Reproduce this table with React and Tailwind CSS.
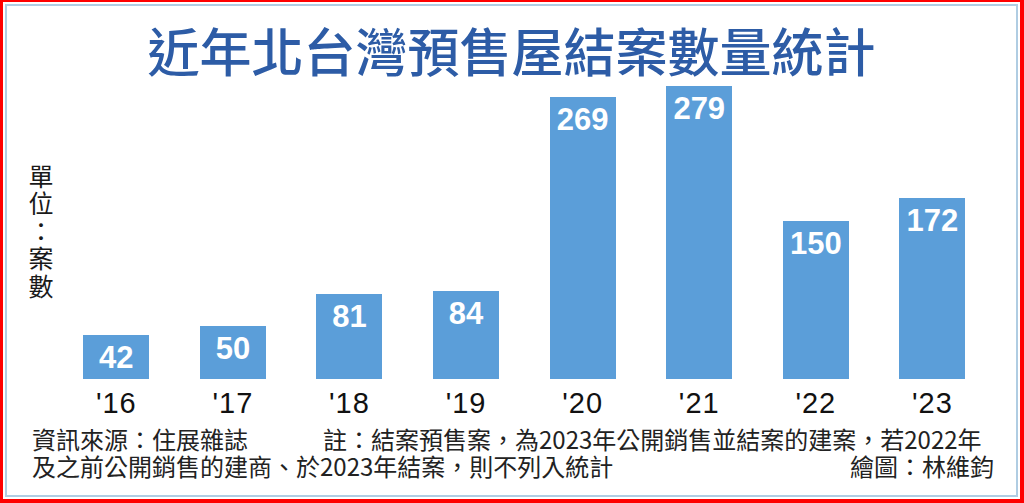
import React from "react";

// 近年北台灣預售屋結案數量統計 (bar chart graphic)
const data = [
  { year: "'16", value: 42 },
  { year: "'17", value: 50 },
  { year: "'18", value: 81 },
  { year: "'19", value: 84 },
  { year: "'20", value: 269 },
  { year: "'21", value: 279 },
  { year: "'22", value: 150 },
  { year: "'23", value: 172 },
];

const PX_PER_CASE = 1.05;
const cjk = "font-['Noto_Sans_CJK_TC','Noto_Sans_CJK_SC',sans-serif]";

function UnitLabel() {
  return (
    <div className="w-[51px] shrink-0 self-start pl-[21px] pt-[78px]">
      <div
        className={`text-[25px] leading-[25px] tracking-[2.4px] text-[#1a1a1a] [writing-mode:vertical-rl] [text-orientation:upright] ${cjk}`}
      >
        單位：案數
      </div>
    </div>
  );
}

function Bar({ value }) {
  return (
    <div className="flex w-[116.6px] shrink-0 justify-center">
      <div
        className="flex w-[66px] justify-center bg-[#5b9ed9] pt-[7px]"
        style={{ height: Math.round(value * PX_PER_CASE) }}
      >
        <span className="font-['Liberation_Sans',sans-serif] text-[31px] font-bold leading-none text-white">
          {value}
        </span>
      </div>
    </div>
  );
}

export default function App() {
  return (
    <div className="h-[503px] w-[1024px] overflow-hidden border-t-2 border-r-4 border-b-4 border-l-[3px] border-[#ff0000] bg-white p-[2px]">
      <div className="flex h-full flex-col border-2 border-[#b0cde3] bg-white">
        {/* title */}
        <div className="h-[80px] shrink-0 pt-[18px] text-center">
          <h1 className={`text-[52px] font-medium leading-none text-[#2d5ca6] ${cjk}`}>
            近年北台灣預售屋結案數量統計
          </h1>
        </div>

        {/* bars */}
        <div className="flex h-[293px] shrink-0 items-end">
          <UnitLabel />
          {data.map((d) => (
            <Bar key={d.year} value={d.value} />
          ))}
        </div>

        {/* years */}
        <div className="flex h-[46px] shrink-0">
          <div className="w-[51px] shrink-0" />
          {data.map((d) => (
            <div
              key={d.year}
              className="w-[116.6px] shrink-0 pt-[10px] text-center font-['Liberation_Sans',sans-serif] text-[29px] leading-none tracking-[1px] text-[#111]"
            >
              {d.year}
            </div>
          ))}
        </div>

        {/* notes */}
        <div className={`pl-[25px] pr-[22px] text-[24px] leading-[27px] text-[#222] ${cjk}`}>
          <div className="flex whitespace-nowrap">
            <span>資訊來源：住展雜誌</span>
            <span className="ml-[75px]">
              註：結案預售案，為2023年公開銷售並結案的建案，若2022年
            </span>
          </div>
          <div className="flex justify-between whitespace-nowrap">
            <span>及之前公開銷售的建商、於2023年結案，則不列入統計</span>
            <span>繪圖：林維鈞</span>
          </div>
        </div>
      </div>
    </div>
  );
}
